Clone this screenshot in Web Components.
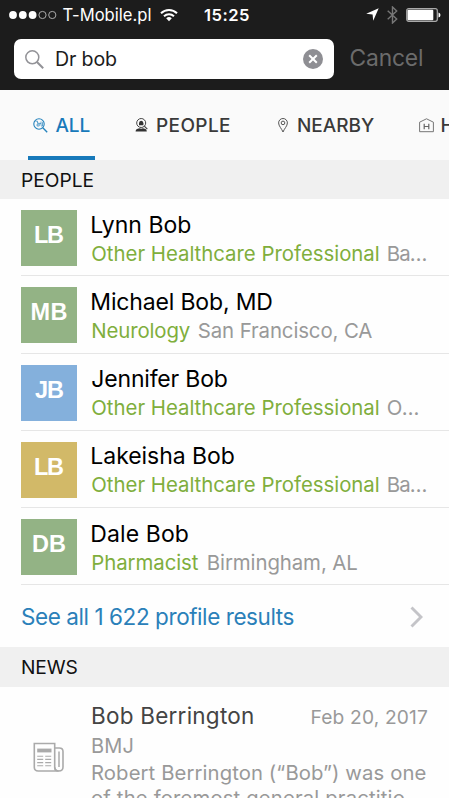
<!DOCTYPE html>
<html lang="en"><head><meta charset="utf-8"><title>Search</title>
<style>
html,body{margin:0;width:449px;height:798px;overflow:hidden;background:#fefefe;font-family:Inter,"Liberation Sans",sans-serif}
</style></head><body>
<search-screen></search-screen>
<script>
const define = (name, html) => customElements.define(name, class extends HTMLElement {
  connectedCallback() {
    if (this.shadowRoot) return;
    this.attachShadow({mode: 'open'}).innerHTML = html(n => this.getAttribute(n) ?? '');
  }
});
const ctx = document.createElement('canvas').getContext('2d');

/* One line of text whose glyphs span exactly w pixels at size s. */
customElements.define('fit-text', class extends HTMLElement {
  connectedCallback() {
    if (this.shadowRoot) return;
    const a = n => this.getAttribute(n), t = a('t'), s = a('s'), wt = a('wt') || 400;
    const fam = a('ff') || 'Inter, "Liberation Sans", sans-serif';
    ctx.font = `${wt} ${s}px ${fam}`;
    const m = ctx.measureText(t), left = -m.actualBoundingBoxLeft;
    const ink = m.actualBoundingBoxRight - left;
    const ls = (a('w') - ink) / (t.length - 1);
    const root = this.attachShadow({mode: 'open'});
    root.innerHTML = `<style>:host{display:block;flex:none;width:${a('w')}px;height:${a('lh')}px;white-space:pre}
      span{display:block;font-family:${fam};font-size:${s}px;font-weight:${wt};line-height:${a('lh')}px;letter-spacing:${ls}px;margin-left:${-left}px}</style><span></span>`;
    root.querySelector('span').textContent = t;
  }
});

define('status-bar', () => `<style>:host{display:flex;height:29px;align-items:center;padding:0 8px 0 9px;color:#fff;box-sizing:border-box}
  svg{flex:none;display:block}.dots{margin-right:5.5px}.wifi{margin:0 26px 0 9.5px}.loc{margin:0 8px 0 117px}.bt{margin-right:8px}</style>
  <svg class="dots" width="48" height="10"><g fill="#fff"><circle cx="4" cy="5" r="3.9"/><circle cx="13.8" cy="5" r="3.9"/><circle cx="23.6" cy="5" r="3.9"/></g><g fill="none" stroke="#aaa" stroke-width="1"><circle cx="33.5" cy="5" r="3.6"/><circle cx="43.3" cy="5" r="3.6"/></g></svg>
  <fit-text t="T-Mobile.pl" s="16.6" w="88" lh="30"></fit-text>
  <svg class="wifi" width="18" height="14" viewBox="0 0 18 14" fill="none" stroke="#fff" stroke-width="2"><path d="M1 5.2a11.5 11.5 0 0 1 16 0M4 8.2a7.2 7.2 0 0 1 10 0"/><path d="M9 13.3l-2.8-3a4 4 0 0 1 5.6 0z" fill="#fff" stroke="none"/></svg>
  <fit-text t="15:25" s="16.6" wt="600" w="45" lh="30"></fit-text>
  <svg class="loc" width="13" height="13" viewBox="0 0 13 13"><path d="M12.7.2L7.2 12.8 6.6 6.4.2 5.8z" fill="#fff"/></svg>
  <svg class="bt" width="11" height="18" viewBox="0 0 11 18" fill="none" stroke="#777" stroke-width="1.4"><path d="M.7 4.8l9 8.2-4.2 4V1l4.2 4-9 8.2"/></svg>
  <svg width="35" height="14" viewBox="0 0 35 14"><rect x=".7" y=".7" width="30.6" height="12.6" rx="2" fill="none" stroke="#aaa" stroke-width="1.2"/><rect x="1.5" y="1.7" width="25.8" height="10.6" rx="1" fill="#fff"/><path d="M32.5 4.5q2 .5 2 2.5t-2 2.5z" fill="#fff"/></svg>`);

define('search-field', () => `<style>:host{display:flex;height:61px;box-sizing:border-box;padding:10px 27px 11px 14px;color:#1c1c1c;justify-content:space-between}
  .box{display:flex;width:320px;height:40px;box-sizing:border-box;border-radius:7px;background:#fff;align-items:center;padding:0 11px;justify-content:space-between}
  .q{display:flex;align-items:center;gap:12px}.c{color:#6b6b6b}svg{display:block}</style>
  <div class="box"><div class="q"><svg width="19" height="19" viewBox="0 0 19 19" fill="none" stroke="#929297" stroke-width="1.5"><circle cx="7.3" cy="7.3" r="6.5"/><path d="M12 12l6.2 6.2" stroke-width="2"/></svg>
  <fit-text t="Dr bob" s="19.6" w="60" lh="38"></fit-text></div>
  <svg width="20" height="20" viewBox="0 0 20 20"><circle cx="10" cy="10" r="10" fill="#8e8e93"/><path d="M6.2 6.2l7.6 7.6M13.8 6.2l-7.6 7.6" stroke="#fff" stroke-width="2"/></svg></div>
  <fit-text class="c" t="Cancel" s="22.8" w="71.5" lh="37"></fit-text>`);

const icons = {
  all: `<svg width="15" height="15" viewBox="0 0 15 15" fill="none" stroke="#2583bd"><circle cx="6" cy="6" r="5.2" stroke-width="1.1"/><path d="M9.8 9.8l4.4 4.4" stroke-width="1.4"/><path d="M2.5 3.2h2v2h2M4 8h2.2v-2h-2zM8 3.5v4M8 5.5H6.2M8 8h1.5V4.2" stroke-width=".7"/></svg>`,
  people: `<svg width="13" height="14" viewBox="0 0 13 14"><circle cx="6.2" cy="5" r="4.5" fill="#fafafa" stroke="#444" stroke-width="1"/><path d="M4 5.3q0-2.5 2.2-2.5t2.2 2.5V7.2H4z" fill="#333"/><path d="M.6 13.5q0-2.6 3.8-3.2l1.8.4 1.8-.4q3.8.6 3.8 3.2z" fill="#333"/><path d="M9.3 8.2l3 3" stroke="#444" stroke-width="1.2"/></svg>`,
  near: `<svg width="10" height="15" viewBox="0 0 10 15" fill="none" stroke="#555" stroke-width="1"><path d="M5 14C3.8 10.8.6 8 .6 4.9a4.4 4.4 0 0 1 8.8 0C9.4 8 6.2 10.8 5 14z"/><circle cx="5" cy="4.9" r="1.8"/></svg>`,
  home: `<svg width="15" height="15" viewBox="0 0 15 15" fill="none" stroke="#666" stroke-width=".9"><path d="M.6 13.7V4.2L7.5.8l6.9 3.4v9.5z"/><path d="M5.2 5.8v5.5M9.8 5.8v5.5M5.2 8.5h4.6" stroke-width="1.2"/></svg>`
};
define('tab-item', a => `<style>:host{display:flex;flex:none;height:70px;box-sizing:border-box;align-items:center;gap:${a('gap')}px;color:#3a3a3a}
  :host([on]){color:#1779ba;border-bottom:4px solid #1779ba;padding:4px 5.5px 0 5px}svg{display:block;flex:none}</style>
  ${icons[a('icon')]}<fit-text t="${a('t')}" s="19" wt="500" w="${a('w')}" lh="72" style="height:70px"></fit-text>`);

define('tab-bar', () => `<style>:host{display:flex;height:70px;padding-left:28px;background:#fafafa;overflow:hidden}
  .p{margin-left:40px}.n{margin-left:48px}.h{margin-left:44.5px}</style>
  <tab-item on icon="all" t="ALL" w="34" gap="7.5"></tab-item>
  <tab-item class="p" icon="people" t="PEOPLE" w="73" gap="9"></tab-item>
  <tab-item class="n" icon="near" t="NEARBY" w="76" gap="10"></tab-item>
  <tab-item class="h" icon="home" t="HOSPITALS" w="112" gap="8"></tab-item>`);

define('section-head', a => `<style>:host{display:flex;height:${a('h')}px;padding-left:22px;background:#f0f0f0;color:#111}</style>
  <fit-text t="${a('t')}" s="19.2" w="${a('w')}" lh="${a('lh')}"></fit-text>`);

define('person-row', a => `<style>:host{display:flex;height:77.25px;box-sizing:border-box;padding:11px 0 0 21px;position:relative;color:#000}
  :host::after{content:"";position:absolute;left:21px;right:0;bottom:0;height:1px;background:#e6e6e6}
  .av{width:56px;height:56px;background:${a('bg')};color:#fff;display:flex;justify-content:center;margin-right:15.3px}
  .txt{padding-top:.7px}.sub{display:flex;gap:9px;color:#999}.sub fit-text:first-child{color:#7fae3c}</style>
  <div class="av"><fit-text t="${a('i')}" s="23.5" wt="700" ff="'Liberation Sans', Arial, sans-serif" w="${a('iw')}" lh="50"></fit-text></div>
  <div class="txt"><fit-text t="${a('name')}" s="23" w="${a('nw')}" lh="29"></fit-text>
  <div class="sub"><fit-text t="${a('job')}" s="20.4" w="${a('jw')}" lh="28"></fit-text><fit-text t="${a('place')}" s="20.4" w="${a('pw')}" lh="28"></fit-text></div></div>`);

define('see-all', () => `<style>:host{display:flex;height:62px;box-sizing:border-box;padding:2px 26px 0 22px;justify-content:space-between;align-items:center;color:#2a80b9}svg{display:block}</style>
  <fit-text t="See all 1 622 profile results" s="22.5" w="271.5" lh="60"></fit-text>
  <svg width="13" height="22" viewBox="0 0 13 22"><path d="M1.5 1.5L11 11l-9.5 9.5" fill="none" stroke="#c4c4c8" stroke-width="2.9"/></svg>`);

define('news-row', () => `<style>:host{display:flex;padding:14px 22px 0 33px;color:#999}
  svg{display:block;flex:none;margin:41px 28px 0 0}.top{display:flex;justify-content:space-between;width:335px}.t{color:#444}</style>
  <svg width="31" height="31" viewBox="0 0 31 31" fill="none" stroke="#aaa" stroke-width="1.6"><path d="M1.3 1.5h20.4v23.7q0 3.8 3.9 3.8H5.2q-3.9 0-3.9-3.8z"/><path d="M21.7 6h4.600q3.700 0 3.700 3.500V25q0 4-4.200 4-3.900 0-4.100-3.800"/><path d="M26 9.500V25" stroke-width="1.5"/><path d="M4.200 8.500h14.300" stroke-width="3.8"/><path d="M4.200 14.200h6M12.200 14.200h6M4.200 17.400h6M12.200 17.400h6M4.200 20.600h6M12.200 20.600h6M4.200 23.800h6M12.200 23.800h6" stroke-width="1.1"/></svg>
  <div><div class="top"><fit-text class="t" t="Bob Berrington" s="22.5" w="161" lh="29"></fit-text><fit-text t="Feb 20, 2017" s="19.2" w="115.5" lh="32"></fit-text></div>
  <fit-text t="BMJ" s="20" w="40.5" lh="27"></fit-text>
  <fit-text t="Robert Berrington (“Bob”) was one" s="20.3" w="333.5" lh="25"></fit-text>
  <fit-text t="of the foremost general practitio…" s="20.3" w="329" lh="25"></fit-text></div>`);

define('search-screen', () => `<style>:host{display:flex;flex-direction:column;height:798px;overflow:hidden;background:#fefefe}
  header{background:#1c1c1c;height:90px;flex:none}section-head,see-all,person-row,tab-bar,news-row{flex:none}</style>
  <header><status-bar></status-bar><search-field></search-field></header>
  <tab-bar></tab-bar>
  <section-head h="39" lh="40" t="PEOPLE" w="71.5"></section-head>
  <person-row bg="#93b385" i="LB" iw="28" name="Lynn Bob" nw="98" job="Other Healthcare Professional" jw="286.5" place="Ba…" pw="39"></person-row>
  <person-row bg="#93b385" i="MB" iw="35" name="Michael Bob, MD" nw="180" job="Neurology" jw="97.5" place="San Francisco, CA" pw="173.5"></person-row>
  <person-row bg="#84b0dc" i="JB" iw="28" name="Jennifer Bob" nw="134.5" job="Other Healthcare Professional" jw="286.5" place="O…" pw="31"></person-row>
  <person-row bg="#d2b968" i="LB" iw="28" name="Lakeisha Bob" nw="141.5" job="Other Healthcare Professional" jw="286.5" place="Ba…" pw="39"></person-row>
  <person-row bg="#93b385" i="DB" iw="32" name="Dale Bob" nw="95.5" job="Pharmacist" jw="106.5" place="Birmingham, AL" pw="149.5"></person-row>
  <see-all></see-all>
  <section-head h="39.75" lh="41" t="NEWS" w="55.5"></section-head>
  <news-row></news-row>`);
</script></body></html>
